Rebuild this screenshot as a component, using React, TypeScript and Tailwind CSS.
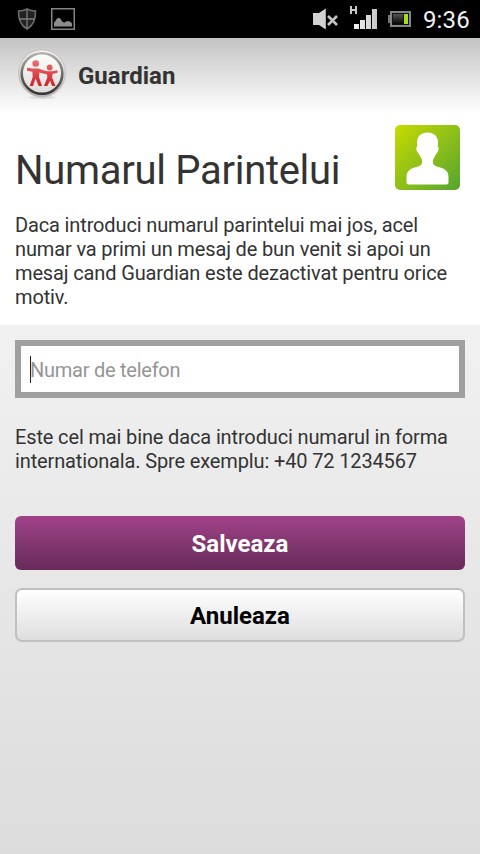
import { useState } from "react";

function StatusBar() {
  return (
    <div className="flex h-[38px] shrink-0 items-center bg-black">
      <svg className="ml-[17px]" width="20" height="22" viewBox="0 0 20 22">
        <path
          d="M10 1C7 2.6 4 3 1.5 3c-.3 8 1.500 14 8.500 18 7-4 8.800-10 8.500-18C16 3 13 2.600 10 1z"
          fill="#222"
          stroke="#6f6f6f"
          strokeWidth="1.500"
        />
        <path d="M10 1.500v19M2 11h16" stroke="#7d7d7d" strokeWidth="1.300" />
      </svg>
      <svg className="ml-[14px]" width="24" height="22" viewBox="0 0 24 22">
        <rect x=".75" y=".75" width="22.500" height="20.500" fill="none" stroke="#858585" strokeWidth="1.500" />
        <path d="M3 18.500v-4l1.500-1.500 1-2L8 9.500l2 2 1.500 2.500 2 .5 2.500-1.500 3 .5 2 2v3z" fill="#8c8c8c" />
      </svg>
      <svg className="ml-auto" width="26" height="22" viewBox="0 0 26 22">
        <path d="M0 5h6l6.800-4.500v21L6 17H0z" fill="#d2d2d2" />
        <path d="M15 8l9 9M24 8l-9 9" stroke="#c4c4c4" strokeWidth="2.600" />
      </svg>
      <svg className="ml-[11px]" width="28" height="26" viewBox="0 0 28 26">
        <defs>
          <linearGradient id="bars" x1="0" x2="1" y1="0" y2="0">
            <stop stopColor="#f4f4f4" />
            <stop offset="1" stopColor="#c8c8c8" />
          </linearGradient>
        </defs>
        <path d="M1 0v8M6 0v8M1 4h5" stroke="#c8c8c8" strokeWidth="2" />
        <path d="M4 18h5v5H4zM10 14h5v9h-5zM16 9h5v14h-5zM22 3h5v20h-5z" fill="url(#bars)" />
      </svg>
      <svg className="ml-[10px]" width="24" height="16" viewBox="0 0 24 16">
        <defs>
          <linearGradient id="cell" x1="0" x2="0" y1="0" y2="1">
            <stop stopColor="#555" />
            <stop offset="1" stopColor="#050505" />
          </linearGradient>
        </defs>
        <path d="M0 4h3v8H0z" fill="#777" />
        <rect x="3" y="1" width="19" height="14" fill="#111" stroke="#858585" strokeWidth="2" />
        <rect x="5" y="3" width="10" height="10" fill="url(#cell)" />
        <path d="M16 3h4v10h-4z" fill="#a6dc18" />
      </svg>
      <span className="mt-px mr-[10px] ml-[11px] text-[24px] leading-none tracking-[0.2px] text-[#f2f2f2]">9:36</span>
    </div>
  );
}

function Logo() {
  return (
    <svg className="-mt-[3px]" width="50" height="52" viewBox="0 0 50 52">
      <defs>
        <linearGradient id="rim" x1="0" x2="0" y1="0" y2="1">
          <stop stopColor="#b5b1ac" />
          <stop offset=".5" stopColor="#6f6b68" />
          <stop offset="1" stopColor="#353433" />
        </linearGradient>
        <linearGradient id="outer" x1="0" x2="0" y1="0" y2="1">
          <stop stopColor="#f8f8f8" />
          <stop offset="1" stopColor="#b5b2af" />
        </linearGradient>
        <linearGradient id="face" x1="0" x2="0" y1="0" y2="1">
          <stop stopColor="#fff" />
          <stop offset="1" stopColor="#dddbd9" />
        </linearGradient>
        <linearGradient id="red" gradientUnits="userSpaceOnUse" x1="0" x2="0" y1="12" y2="39">
          <stop stopColor="#ef6f70" />
          <stop offset="1" stopColor="#cb1f27" />
        </linearGradient>
      </defs>
      <ellipse cx="25" cy="49.500" rx="13" ry="1.500" fill="#000" opacity=".1" />
      <circle cx="25" cy="25.500" r="23.500" fill="url(#outer)" stroke="#bbb8b5" strokeWidth=".7" />
      <circle cx="25" cy="25.500" r="20.300" fill="url(#face)" stroke="url(#rim)" strokeWidth="2.600" />
      <g fill="url(#red)">
        <circle cx="18.700" cy="15.500" r="3.300" />
        <circle cx="32.700" cy="19.500" r="2.900" />
        <path d="M10 19.800l6 .6h5.500l5.500 2 3.500.8h5l5-1v2.600l-5 1.200-.4 3.500 3.400 8.500h-3.300L33 32.800 30.300 38H27l3.300-8.500-.3-3.200-3.800-.8-4-1.100-.2 4.600 3 9h-3.400l-3-7.500L16 38h-3.300l3-9-.3-5.200-5.400-1z" />
      </g>
    </svg>
  );
}

function ParentIcon() {
  return (
    <svg className="mt-[12px]" width="65" height="65" viewBox="0 0 65 65">
      <defs>
        <linearGradient id="green" x1="0" x2="1" y1="0" y2="1">
          <stop stopColor="#c8db00" />
          <stop offset="1" stopColor="#55a430" />
        </linearGradient>
      </defs>
      <rect width="65" height="65" rx="5" fill="url(#green)" />
      <path
        d="M32.500 7.500c-7.500 0-11 5-10.500 11.500l.3 2.700c-1.600.3-1.300 3 .2 5.500.8 1.400 1.500 1.500 2 3l2.500 4.500c.5 4-.3 5.500-4 6.700-7 1.700-11.500 3.800-11.500 10.600v5.500q0 2 2 2h38q2 0 2-2V52c0-6.800-4.500-8.900-11.500-10.600-3.700-1.200-4.500-2.700-4-6.700l2.500-4.500c.5-1.500 1.200-1.600 2-3 1.500-2.500 1.800-5.200.2-5.500L43 19c.5-6.500-3-11.500-10.500-11.500z"
        fill="#fff"
      />
    </svg>
  );
}

export default function App() {
  const [phone, setPhone] = useState("");

  return (
    <div className="flex h-[854px] w-[480px] flex-col overflow-hidden bg-white font-[Roboto,sans-serif] text-[20px] leading-6 text-[#333]">
      <StatusBar />
      <header className="flex h-[75px] shrink-0 items-center bg-linear-to-b from-[#c4c4c4] to-white pl-[17px]">
        <Logo />
        <span className="ml-[11px] text-[24px] font-bold">Guardian</span>
      </header>

      <section className="h-[212px] shrink-0 px-[15px]">
        <div className="flex h-[100px] items-start justify-between pr-[5px]">
          <h1 className="mt-[34px] text-[40px] leading-[48px] tracking-[-0.3px]">Numarul Parintelui</h1>
          <ParentIcon />
        </div>
        <p className="tracking-[-0.14px]">
          Daca introduci numarul parintelui mai jos, acel numar va primi un mesaj de bun venit si apoi un mesaj
          cand Guardian este dezactivat pentru orice motiv.
        </p>
      </section>

      <form
        onSubmit={(e) => e.preventDefault()}
        className="flex flex-1 flex-col bg-linear-to-b from-[#f1f1f1] to-[#dcdcdc] px-[15px] pt-[15px]"
      >
        <label className="flex h-[58px] items-center border-6 border-[#a0a0a0] bg-white pl-[9px]">
          <span className="h-[27px] w-px bg-[#222]" />
          <input
            type="tel"
            value={phone}
            onChange={(e) => setPhone(e.target.value)}
            placeholder="Numar de telefon"
            className="-ml-px min-w-0 flex-1 pt-[2px] tracking-[-0.25px] outline-none placeholder:text-[#959595]"
          />
        </label>
        <p className="mt-[27px] tracking-[-0.14px]">
          Este cel mai bine daca introduci numarul in forma internationala. Spre exemplu: +40 72 1234567
        </p>
        <button
          type="submit"
          className="mt-[43px] h-[54px] rounded-[6px] bg-linear-to-b from-[#a14389] to-[#672b5a] pt-[2px] text-[24px] font-bold text-white"
        >
          Salveaza
        </button>
        <button
          type="button"
          onClick={() => setPhone("")}
          className="mt-[18px] h-[54px] rounded-[7px] border-2 border-[#c0c0c0] bg-linear-to-b from-white to-[#dedede] pt-[2px] text-[24px] font-bold text-black"
        >
          Anuleaza
        </button>
      </form>
    </div>
  );
}
